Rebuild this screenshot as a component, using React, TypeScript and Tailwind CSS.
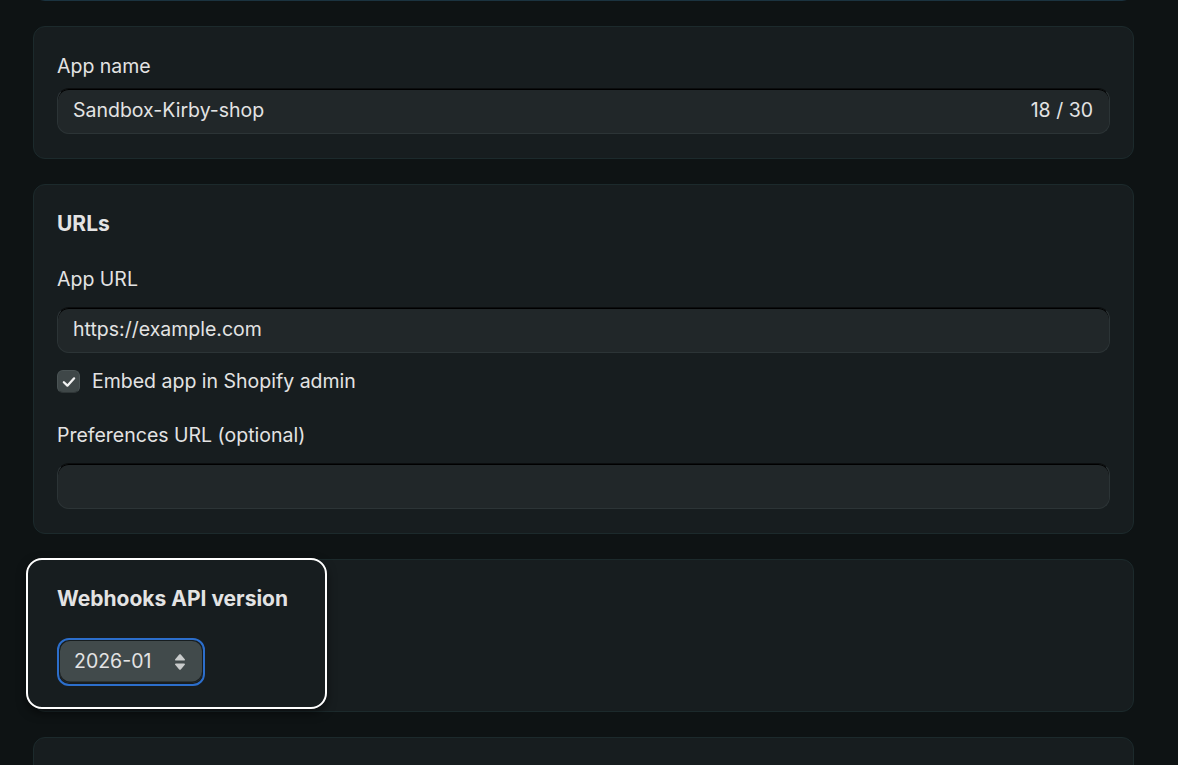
import React from 'react';

function Card({ children, className = '' }: { children: React.ReactNode; className?: string }) {
  return (
    <div
      className={`relative rounded-xl border border-[#1c2a2c] bg-[#171d1f] px-[23px] pt-6 ${className}`}
    >
      {children}
    </div>
  );
}

function TextField({ value, suffix }: { value?: string; suffix?: string }) {
  return (
    <div className="flex h-[46px] items-center justify-between rounded-xl border border-[#2c3436] border-t-[#0b0d0e] bg-[#212729] pl-[15px] pr-4 shadow-[inset_0_1px_0_#000]">
      <span className="text-[19.5px] text-[#e3e3e3]">{value}</span>
      {suffix && <span className="text-[19.5px] text-[#e3e3e3]">{suffix}</span>}
    </div>
  );
}

export default function App() {
  return (
    <div
      className="min-h-screen overflow-hidden bg-[#0e1314] pl-[33px]"
      style={{ fontFamily: 'Inter, "Noto Sans", sans-serif' }}
    >
      <div className="flex w-[1101px] flex-col gap-[25px]">
        {/* card above, only its bottom edge is visible */}
        <div className="-mt-[100px] h-[101px] rounded-xl border border-[#1b3340] bg-[#151b1d]" />

        {/* App name */}
        <Card className="pb-6">
          <div className="mb-[7px] text-[19.5px] leading-[30px] text-[#e3e3e3]">App name</div>
          <TextField value="Sandbox-Kirby-shop" suffix="18 / 30" />
        </Card>

        {/* URLs */}
        <Card className="pb-6">
          <h2 className="text-[21px] font-bold leading-[30px] text-[#e3e3e3]">URLs</h2>
          <div className="mt-[25px] mb-[13px] text-[19.5px] leading-[30px] text-[#e3e3e3]">App URL</div>
          <TextField value="https://example.com" />
          <div className="mt-[15px] flex h-[27px] items-center gap-3">
            <span className="flex h-[23px] w-[23px] items-center justify-center rounded-md border border-[#4a5354] border-b-[#2f3637] bg-[#3f4748]">
              <svg width="16" height="16" viewBox="0 0 14 14" fill="none">
                <path d="M2.5 7.2 5.6 10.2 11.5 3.8" stroke="#f2f2f2" strokeWidth="2" strokeLinecap="round" strokeLinejoin="round" />
              </svg>
            </span>
            <span className="text-[19.5px] text-[#e3e3e3]">Embed app in Shopify admin</span>
          </div>
          <div className="mt-[25px] mb-[13px] text-[19.5px] leading-[30px] text-[#e3e3e3]">
            Preferences URL (optional)
          </div>
          <TextField />
        </Card>

        {/* Webhooks API version */}
        <Card className="pb-[25px]">
          {/* highlight annotation */}
          <div className="pointer-events-none absolute -left-[8px] -top-[2px] h-[151px] w-[301px] rounded-2xl border-2 border-white bg-[#171d1f] shadow-[0_4px_10px_rgba(0,0,0,0.5)]" />
          <div className="relative">
            <h2 className="text-[21px] font-bold leading-[30px] text-[#e3e3e3]">Webhooks API version</h2>
            <div className="mt-[24px] inline-flex rounded-[12px] border-2 border-[#2c6ecb] p-px">
              <div className="flex h-[42px] w-[142px] items-center justify-between rounded-[10px] bg-[#414a4b] pl-[14px] pr-[16px] shadow-[inset_0_-1.5px_0_#1a1e1f]">
                <span className="text-[19.5px] text-[#e3e3e3]">2026-01</span>
                <svg width="12" height="18" viewBox="0 0 12 18" fill="#c9cccc">
                  <path d="M6 1.2c.3 0 .6.1.8.4l4 4.6c.4.5.1 1.3-.6 1.3H1.8c-.7 0-1-.8-.6-1.3l4-4.6c.2-.3.5-.4.8-.4Z" />
                  <path d="M6 16.8c.3 0 .6-.1.8-.4l4-4.6c.4-.5.1-1.3-.6-1.3H1.8c-.7 0-1 .8-.6 1.3l4 4.6c.2.3.5.4.8.4Z" />
                </svg>
              </div>
            </div>
          </div>
        </Card>

        {/* next card, cut off */}
        <Card className="h-[120px]">
          <div />
        </Card>
      </div>
    </div>
  );
}
